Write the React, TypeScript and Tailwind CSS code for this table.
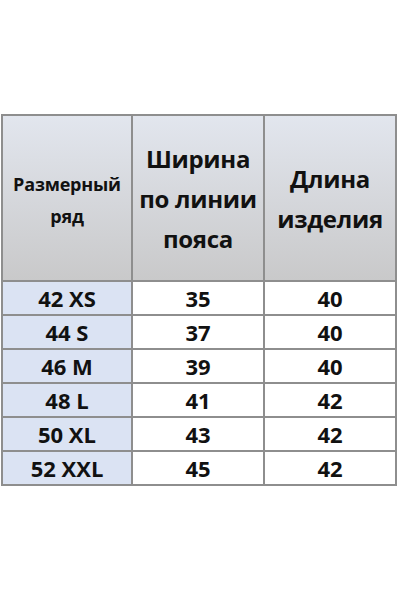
const rows = [
  ["42 XS", "35", "40"],
  ["44 S", "37", "40"],
  ["46 M", "39", "40"],
  ["48 L", "41", "42"],
  ["50 XL", "43", "42"],
  ["52 XXL", "45", "42"],
];

const header = "flex items-center justify-center text-center bg-gradient-to-b from-[#e2e6ee] to-[#c9c9ca]";

export default function App() {
  return (
    <div className="h-[600px] w-[400px] bg-white pt-[114px] font-['Open_Sans',sans-serif] font-bold text-[#111]">
      <div className="ml-[1px] grid w-[396px] grid-cols-[128px_130px_130px] gap-[2px] bg-[#8e8e8e] p-[2px]">
        <div className={`${header} h-[164px] text-[18px] leading-[32px] tracking-[-0.2px]`}>
          <div className="pt-[4px]">
            Размерный
            <br />
            ряд
          </div>
        </div>
        <div className={`${header} text-[24px] leading-[40px] tracking-[-0.3px]`}>
          <div className="pt-[2px]">
            Ширина
            <br />
            по линии
            <br />
            пояса
          </div>
        </div>
        <div className={`${header} text-[24px] leading-[40px] tracking-[-0.3px]`}>
          <div className="pt-[2px]">
            Длина
            <br />
            изделия
          </div>
        </div>
        {rows.map((r) => (
          <>
            <div key={r[0]} className="flex h-[32px] items-center justify-center bg-[#dbe3f3] text-[22px]">
              {r[0]}
            </div>
            <div className="flex h-[32px] items-center justify-center bg-white text-[22px]">{r[1]}</div>
            <div className="flex h-[32px] items-center justify-center bg-white text-[22px]">{r[2]}</div>
          </>
        ))}
      </div>
    </div>
  );
}
